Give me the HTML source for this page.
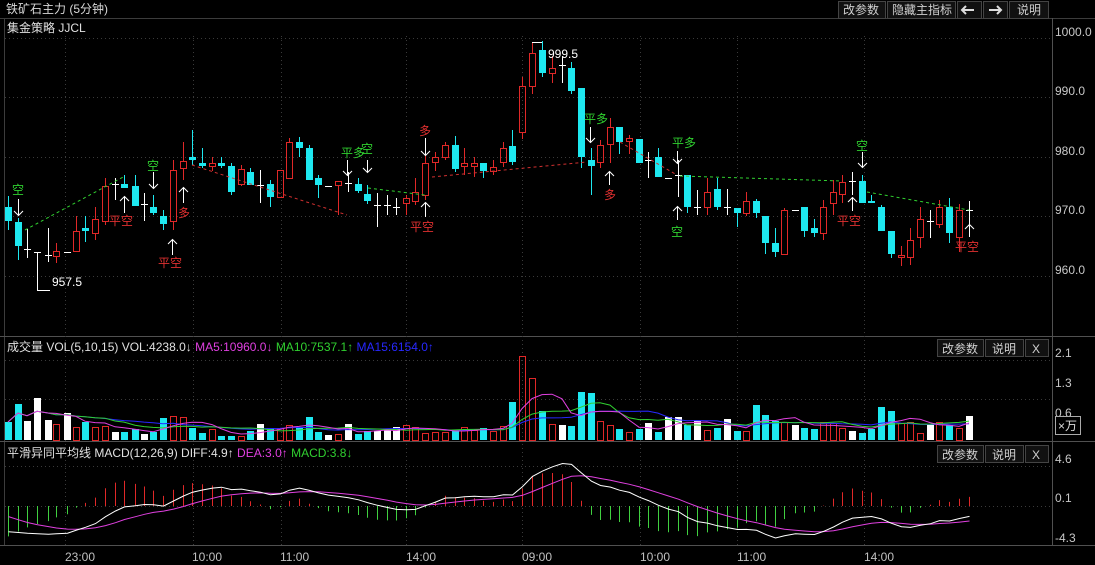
<!DOCTYPE html>
<html><head><meta charset="utf-8">
<style>
html,body{margin:0;padding:0;background:#000;width:1095px;height:565px;overflow:hidden;}
body{font-family:"Liberation Sans","Noto Sans CJK SC",sans-serif;}
svg{display:block;}
text{font-family:"Liberation Sans","Noto Sans CJK SC",sans-serif;font-size:12px;}
</style></head><body>
<svg id="s" width="1095" height="565" xmlns="http://www.w3.org/2000/svg">
<rect width="1095" height="565" fill="#000"/>
<line x1="0" y1="18.5" x2="1095" y2="18.5" stroke="#3c3c3c"/>
<line x1="4.5" y1="18" x2="4.5" y2="545" stroke="#3c3c3c"/>
<line x1="1052.5" y1="18" x2="1052.5" y2="545" stroke="#505050"/>
<line x1="0" y1="336.5" x2="1095" y2="336.5" stroke="#505050"/>
<line x1="0" y1="441.5" x2="1095" y2="441.5" stroke="#505050"/>
<line x1="0" y1="545.5" x2="1095" y2="545.5" stroke="#505050"/>
<g id="grid" stroke="#3a3a3a" stroke-dasharray="1,3"></g>
<text x="6" y="13" fill="#d8d8d8">铁矿石主力 (5分钟)</text>
<g fill="#111" stroke="#444">
<rect x="838.5" y="1.5" width="47" height="17"/>
<rect x="887.5" y="1.5" width="68" height="17"/>
<rect x="957.5" y="1.5" width="24" height="17"/>
<rect x="983.5" y="1.5" width="24" height="17"/>
<rect x="1009.5" y="1.5" width="39" height="17"/>
</g>
<g fill="#d0d0d0">
<text x="843" y="14">改参数</text>
<text x="892" y="14">隐藏主指标</text>
<text x="1017" y="14">说明</text>
</g>
<path d="M962 10h12M966 6l-4 4 4 4" stroke="#ddd" stroke-width="2" fill="none"/>
<path d="M989 10h12M997 6l4 4-4 4" stroke="#ddd" stroke-width="2" fill="none"/>
<text x="7" y="32" fill="#e0e0e0">集金策略 JJCL</text>
<g fill="#c8c8c8">
<text x="1055" y="36">1000.0</text>
<text x="1055" y="95">990.0</text>
<text x="1055" y="155">980.0</text>
<text x="1055" y="214">970.0</text>
<text x="1055" y="274">960.0</text>
<text x="1055" y="357">2.1</text>
<text x="1055" y="387">1.3</text>
<text x="1055" y="417">0.6</text>
<text x="1055" y="463">4.6</text>
<text x="1055" y="502">0.1</text>
<text x="1055" y="542">-4.3</text>
</g>
<rect x="1055.5" y="416.5" width="25" height="18" fill="none" stroke="#aaa"/>
<text x="1058" y="430" fill="#ddd">×万</text>
<g fill="#c0c0c0">
<text x="65" y="561">23:00</text>
<text x="192" y="561">10:00</text>
<text x="280" y="561">11:00</text>
<text x="406" y="561">14:00</text>
<text x="522" y="561">09:00</text>
<text x="640" y="561">10:00</text>
<text x="737" y="561">11:00</text>
<text x="864" y="561">14:00</text>
</g>
<g fill="#111" stroke="#444">
<rect x="937.5" y="339.5" width="46" height="17"/><rect x="985.5" y="339.5" width="38" height="17"/><rect x="1025.5" y="339.5" width="23" height="17"/>
<rect x="937.5" y="445.5" width="46" height="17"/><rect x="985.5" y="445.5" width="38" height="17"/><rect x="1025.5" y="445.5" width="23" height="17"/>
</g>
<g fill="#d0d0d0">
<text x="942" y="353">改参数</text><text x="992" y="353">说明</text><text x="1032" y="353">X</text>
<text x="942" y="459">改参数</text><text x="992" y="459">说明</text><text x="1032" y="459">X</text>
</g>
<text x="7" y="351"><tspan fill="#e0e0e0">成交量 VOL(5,10,15) VOL:4238.0↓ </tspan><tspan fill="#e040e0">MA5:10960.0↓ </tspan><tspan fill="#30d030">MA10:7537.1↑ </tspan><tspan fill="#2828ff">MA15:6154.0↑</tspan></text>
<text x="7" y="457"><tspan fill="#e0e0e0">平滑异同平均线 MACD(12,26,9) DIFF:4.9↑ </tspan><tspan fill="#e040e0">DEA:3.0↑ </tspan><tspan fill="#30d030">MACD:3.8↓</tspan></text>
<g id="dyn"></g>
<g fill="none" stroke-width="1" stroke-dasharray="3,3">
<polyline points="25,230 125,176" stroke="#30d030"/>
<polyline points="192,165 347,215" stroke="#d03030"/>
<polyline points="368,188 425,195" stroke="#30d030"/>
<polyline points="432,177 587,162" stroke="#d03030"/>
<polyline points="620,142 677,175" stroke="#d03030"/>
<polyline points="680,176 842,181" stroke="#30d030"/>
<polyline points="867,192 969,210" stroke="#30d030"/>
</g>
<path d="M37.5 255V290.5H50" stroke="#fff" fill="none"/>
<text x="52" y="286" fill="#fff">957.5</text>
<path d="M532 42.5H542" stroke="#fff" fill="none"/>
<text x="548" y="58" fill="#fff">999.5</text>
<g stroke="#fff" fill="none" stroke-width="1">
<path d="M18.5 199v16M14 211l4.5 4.5 4.5-4.5"/>
<path d="M124.5 213v-16M120 201l4.5-4.5 4.5 4.5"/>
<path d="M153.5 172v16M149 184l4.5 4.5 4.5-4.5"/>
<path d="M172.5 255v-15M168 244l4.5-4.5 4.5 4.5"/>
<path d="M183.5 203v-15M179 192l4.5-4.5 4.5 4.5"/>
<path d="M347.5 160v15M343 171l4.5 4.5 4.5-4.5"/>
<path d="M367.5 160v12M363 168l4.5 4.5 4.5-4.5"/>
<path d="M425.5 138v17M421 151l4.5 4.5 4.5-4.5"/>
<path d="M425.5 217v-14M421 207l4.5-4.5 4.5 4.5"/>
<path d="M590.5 127v15M586 138l4.5 4.5 4.5-4.5"/>
<path d="M609.5 185v-13M605 176l4.5-4.5 4.5 4.5"/>
<path d="M677.5 151v12M673 159l4.5 4.5 4.5-4.5"/>
<path d="M677.5 220v-13M673 211l4.5-4.5 4.5 4.5"/>
<path d="M862.5 152v15M858 163l4.5 4.5 4.5-4.5"/>
<path d="M852.5 211v-13M848 202l4.5-4.5 4.5 4.5"/>
<path d="M969.5 237v-12M965 229l4.5-4.5 4.5 4.5"/>
</g>
<g font-size="12">
<text x="12" y="194" fill="#30d030">空</text>
<text x="109" y="225" fill="#e03030">平空</text>
<text x="147" y="170" fill="#30d030">空</text>
<text x="158" y="267" fill="#e03030">平空</text>
<text x="178" y="217" fill="#e03030">多</text>
<text x="341" y="157" fill="#30d030">平多</text>
<text x="361" y="153" fill="#30d030">空</text>
<text x="419" y="135" fill="#e03030">多</text>
<text x="410" y="231" fill="#e03030">平空</text>
<text x="584" y="123" fill="#30d030">平多</text>
<text x="604" y="199" fill="#e03030">多</text>
<text x="672" y="147" fill="#30d030">平多</text>
<text x="671" y="236" fill="#30d030">空</text>
<text x="856" y="150" fill="#30d030">空</text>
<text x="837" y="225" fill="#e03030">平空</text>
<text x="955" y="251" fill="#e03030">平空</text>
</g>
</svg>
<script>
var C=[[8,207,221,196,230,'c'],[18,222,246,218,260,'c'],[27,249,249,229,258,'w'],[37,252,252,252,258,'w'],[48,255,255,228,262,'w'],[56,256,251,243,263,'r'],[67,252,252,252,252,'w'],[76,251,231,216,251,'r'],[85,228,231,216,242,'c'],[95,233,219,207,240,'r'],[105,221,186,178,225,'r'],[115,184,184,178,200,'w'],[124,184,188,175,188,'c'],[135,186,206,175,206,'c'],[144,204,204,193,221,'w'],[153,207,213,195,215,'c'],[163,216,224,210,230,'c'],[173,221,170,160,230,'r'],[183,168,161,142,180,'r'],[192,157,160,130,165,'c'],[202,163,166,148,168,'c'],[212,166,163,157,171,'r'],[221,163,166,157,168,'c'],[231,166,192,163,195,'c'],[241,184,169,165,186,'r'],[250,172,185,168,185,'c'],[260,185,185,170,203,'w'],[270,184,197,180,207,'c'],[280,197,170,170,197,'r'],[289,178,142,138,178,'r'],[299,142,148,137,157,'c'],[309,148,180,145,180,'c'],[318,178,185,175,198,'c'],[328,186,186,186,186,'w'],[338,185,181,181,215,'r'],[348,183,183,172,192,'w'],[358,184,191,178,193,'c'],[367,194,201,185,204,'c'],[377,205,205,193,227,'w'],[387,205,205,195,215,'w'],
[396,207,207,198,215,'w'],[406,203,198,195,215,'r'],[415,201,192,178,205,'r'],[425,195,163,140,200,'r'],[435,162,157,152,171,'r'],[445,157,145,142,160,'r'],[455,145,169,136,172,'c'],[464,166,163,148,175,'r'],[474,166,163,157,177,'r'],[483,163,171,163,178,'c'],[493,171,167,160,175,'r'],[503,162,148,142,167,'r'],[512,146,162,130,165,'c'],[522,132,86,77,139,'r'],[532,86,53,43,94,'r'],[542,50,73,41,77,'c'],[552,73,68,56,83,'r'],[562,65,65,56,83,'w'],[571,68,91,62,94,'c'],[581,88,157,88,168,'c'],[591,160,166,148,195,'c'],[600,162,145,140,168,'r'],[610,144,127,118,163,'r'],[619,127,142,127,154,'c'],[629,141,138,135,154,'r'],[639,139,163,139,163,'c'],[648,160,160,152,178,'w'],[658,157,177,148,177,'c'],[668,178,178,178,178,'w'],[678,175,175,160,197,'w'],[687,175,207,175,213,'c'],[697,207,207,190,215,'w'],[707,207,192,178,215,'r'],[717,189,207,178,210,'c'],[727,207,207,189,215,'w'],[737,208,213,208,227,'c'],[746,213,201,192,216,'r'],[756,201,213,199,218,'c'],[765,216,243,216,254,'c'],[775,243,252,228,257,'c'],[784,254,210,208,254,'r'],[795,210,210,210,210,'w'],[804,207,231,207,237,'c'],[814,228,233,219,237,'c'],[823,233,207,200,240,'r'],[833,203,192,180,215,'r'],[842,194,182,175,203,'r'],[852,181,181,172,195,'w'],[862,181,203,175,203,'c'],[871,201,203,195,203,'c'],[881,207,231,205,231,'c'],[891,231,254,231,258,'c'],[901,257,255,246,266,'r'],[910,257,240,228,265,'r'],[920,237,219,207,248,'r'],[930,221,221,210,238,'w'],[939,224,207,200,228,'r'],[949,207,233,198,243,'c'],[959,237,210,204,252,'r'],[969,210,210,201,228,'w']];
var V=[422,404,421,398,420,424,413,427,422,427,426,432,432,429,434,432,418,416,417,428,433,429,436,436,436,431,424,428,428,425,427,417,432,435,434,424,434,431,431,430,427,425,427,433,432,432,431,427,430,428,431,426,402,356,378,411,424,425,426,392,393,421,425,429,432,429,423,432,417,417,425,421,430,428,419,431,431,405,415,421,422,425,428,429,422,423,428,431,433,429,407,411,423,422,433,424,422,425,428,416];
var CY='#1ee8f0',RD='#e02828',h='';
var g='';
[38,97,157,216,276].forEach(function(y){g+='<line x1="5" y1="'+(y+.5)+'" x2="1052" y2="'+(y+.5)+'"/>';});
[360,399].forEach(function(y){g+='<line x1="5" y1="'+(y+.5)+'" x2="1052" y2="'+(y+.5)+'"/>';});
[466,506].forEach(function(y){g+='<line x1="5" y1="'+(y+.5)+'" x2="1052" y2="'+(y+.5)+'"/>';});
[65,193,281,406,522,640,737,864].forEach(function(x){g+='<line x1="'+(x+.5)+'" y1="36" x2="'+(x+.5)+'" y2="545"/>';});
document.getElementById('grid').innerHTML=g;
C.forEach(function(c,i){
 var x=c[0],o=c[1],cl=c[2],hi=c[3],lo=c[4],t=c[5];
 var top=Math.min(o,cl),bot=Math.max(o,cl);
 if(t=='w'){h+='<line x1="'+(x+.5)+'" y1="'+hi+'" x2="'+(x+.5)+'" y2="'+lo+'" stroke="#fff"/><line x1="'+(x-3)+'" y1="'+(o+.5)+'" x2="'+(x+4)+'" y2="'+(o+.5)+'" stroke="#fff"/>';}
 else if(t=='r'){h+='<line x1="'+(x+.5)+'" y1="'+hi+'" x2="'+(x+.5)+'" y2="'+top+'" stroke="'+RD+'"/><line x1="'+(x+.5)+'" y1="'+bot+'" x2="'+(x+.5)+'" y2="'+lo+'" stroke="'+RD+'"/><rect x="'+(x-2.5)+'" y="'+(top+.5)+'" width="6" height="'+Math.max(bot-top,2)+'" fill="none" stroke="'+RD+'"/>';}
 else {h+='<line x1="'+(x+.5)+'" y1="'+hi+'" x2="'+(x+.5)+'" y2="'+lo+'" stroke="'+CY+'"/><rect x="'+(x-3)+'" y="'+top+'" width="7" height="'+Math.max(bot-top,2)+'" fill="'+CY+'"/>';}
 var vt=V[i];
 if(t=='r')h+='<rect x="'+(x-2.5)+'" y="'+(vt+.5)+'" width="6" height="'+(440-vt)+'" fill="none" stroke="'+RD+'"/>';
 else h+='<rect x="'+(x-3)+'" y="'+vt+'" width="7" height="'+(440-vt)+'" fill="'+(t=='w'?'#fff':CY)+'"/>';
});
function ma(n,col){var p=[];for(var i=0;i<V.length;i++){var s=0,k=0;for(var j=Math.max(0,i-n+1);j<=i;j++){s+=440-V[j];k++;}p.push(C[i][0]+','+(440-s/k).toFixed(1));}return '<polyline points="'+p.join(' ')+'" fill="none" stroke="'+col+'"/>';}
h+=ma(15,'#2828ff')+ma(10,'#30d030')+ma(5,'#e040e0');
var P=C.map(function(c){return (276-c[2])/5.95+960;});
var e12=P[0]-0.3,e26=P[0]+3.0,dea=-0.8,dp=[],ep=[],bars='',S=8.5,Z=506;
P.forEach(function(p,i){e12=e12+(p-e12)*2/13;e26=e26+(p-e26)*2/27;var dif=e12-e26;dea=dea+(dif-dea)*2/10;var m=2*(dif-dea);var x=C[i][0]+.5;
 bars+='<line x1="'+x+'" y1="'+Z+'" x2="'+x+'" y2="'+(Z-m*S).toFixed(1)+'" stroke="'+(m>=0?'#e02828':'#40d040')+'"/>';
 dp.push(x+','+(Z-dif*S).toFixed(1));ep.push(x+','+(Z-dea*S).toFixed(1));});
h+=bars+'<polyline points="'+ep.join(' ')+'" fill="none" stroke="#e040e0"/><polyline points="'+dp.join(' ')+'" fill="none" stroke="#fff"/>';
document.getElementById('dyn').innerHTML=h;
</script>
</body></html>
